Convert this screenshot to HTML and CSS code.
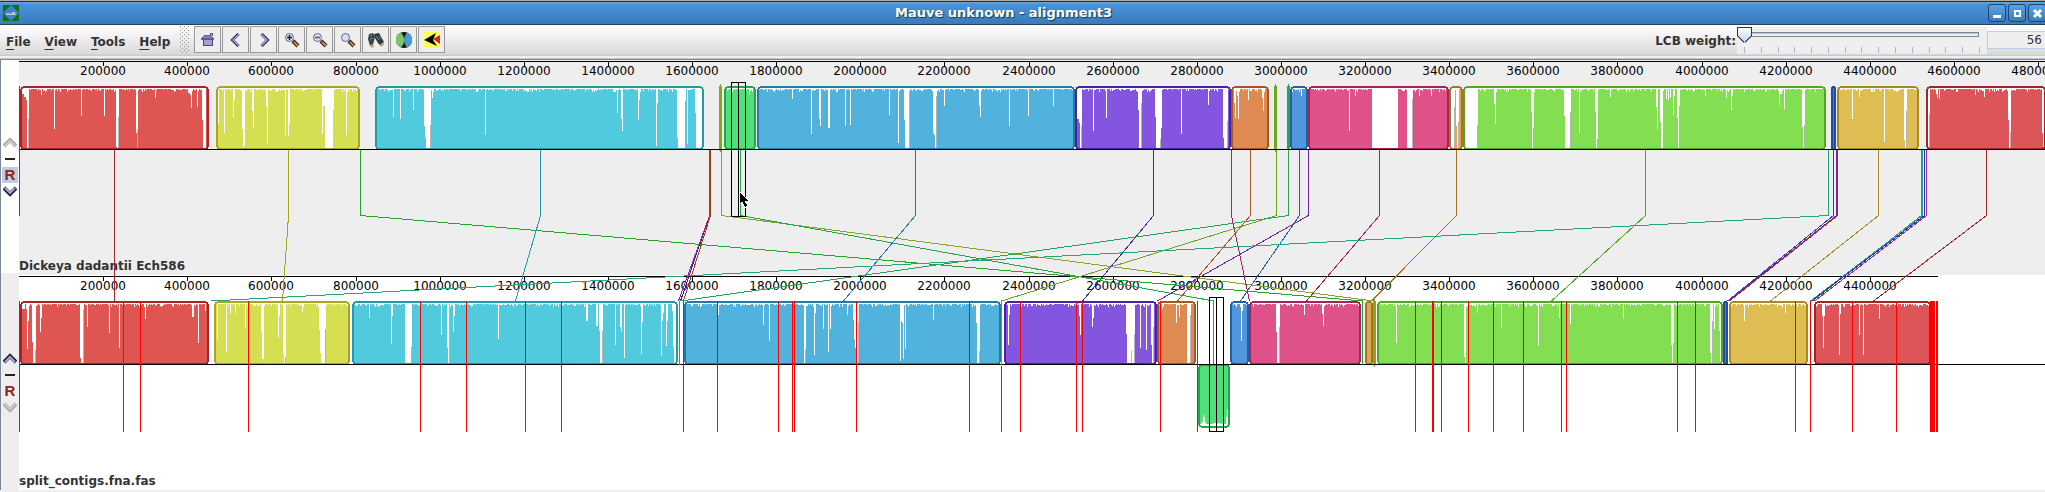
FILE: index.html
```html
<!DOCTYPE html>
<html lang="en">
<head>
<meta charset="utf-8">
<title>Mauve unknown - alignment3</title>
<link rel="stylesheet" href="styles.css">
</head>
<body>
<header class="titlebar">
  <svg class="app-icon" width="16" height="16" viewBox="0 0 16 16" aria-hidden="true"><rect width="16" height="16" fill="#157015"/><path d="M8 0L16 8L8 16L0 8Z" fill="#3c82d2"/><path d="M3 9h10v1H3zM4 8h2v1H4zM7 8h1v1H7zM9 7h3v2H9z" fill="#c4c8c8"/></svg>
  <h1 class="title">Mauve unknown - alignment3</h1>
  <div class="window-buttons">
    <button class="wbtn" aria-label="Minimize"><svg width="16" height="16" shape-rendering="crispEdges"><path d="M4 10h8v3H4z" fill="#fff"/></svg></button>
    <button class="wbtn" aria-label="Maximize"><svg width="16" height="16" shape-rendering="crispEdges"><path d="M6 6h5v5H6z" fill="none" stroke="#fff" stroke-width="2"/></svg></button>
    <button class="wbtn" aria-label="Close"><svg width="16" height="16"><path d="M5 5L12 12M12 5L5 12" stroke="#fff" stroke-width="3"/></svg></button>
  </div>
</header>

<div class="menubar">
  <nav class="menus">
    <button class="menu"><u>F</u>ile</button>
    <button class="menu"><u>V</u>iew</button>
    <button class="menu"><u>T</u>ools</button>
    <button class="menu"><u>H</u>elp</button>
  </nav>
  <div class="toolbar">
    <span class="grip"></span>
    <button class="tool" aria-label="Home"><svg width="16" height="16" shape-rendering="crispEdges"><path d="M10 1h3v3h-3zM4 3h6l4 3v2H1V6z" fill="#5c5c90"/><path d="M3 8h10v6H3z" fill="#4a4a7c"/><path d="M4 8h8v5H4z" fill="#a0a0d2"/><path d="M4 4h6l2 2H2z" fill="#8484b8"/><path d="M11 2h1v2h-1z" fill="#a0a0d2"/></svg></button>
    <button class="tool" aria-label="Back"><svg width="16" height="16"><path d="M10.500 2L4.500 8L10.500 14" fill="none" stroke="#222238" stroke-width="3"/><path d="M10.500 2.500L5 8L10.500 13.500" fill="none" stroke="#a8a8e8" stroke-width="1.500"/></svg></button>
    <button class="tool" aria-label="Forward"><svg width="16" height="16"><path d="M5.500 2L11.500 8L5.500 14" fill="none" stroke="#222238" stroke-width="3"/><path d="M5.500 2.500L11 8L5.500 13.500" fill="none" stroke="#a8a8e8" stroke-width="1.500"/></svg></button>
    <button class="tool" aria-label="Zoom in"><svg width="16" height="16"><path d="M9 9L14 14" stroke="#33231c" stroke-width="4"/><path d="M10 10L14 14" stroke="#d08850" stroke-width="2"/><circle cx="5.500" cy="5.500" r="4" fill="#dcdcf8" stroke="#66667c" stroke-width="1"/><path d="M3 5.500h5M5.500 3v5" stroke="#222" stroke-width="1.500"/></svg></button>
    <button class="tool" aria-label="Zoom out"><svg width="16" height="16"><path d="M9 9L14 14" stroke="#33231c" stroke-width="4"/><path d="M10 10L14 14" stroke="#d08850" stroke-width="2"/><circle cx="5.500" cy="5.500" r="4" fill="#dcdcf8" stroke="#66667c" stroke-width="1"/><path d="M3 5.500h5" stroke="#555577" stroke-width="1.500"/></svg></button>
    <button class="tool" aria-label="Zoom reset"><svg width="16" height="16"><path d="M9 9L14 14" stroke="#33231c" stroke-width="4"/><path d="M10 10L14 14" stroke="#d08850" stroke-width="2"/><circle cx="5.500" cy="5.500" r="4" fill="#dcdcf8" stroke="#66667c" stroke-width="1"/></svg></button>
    <button class="tool" aria-label="Find"><svg width="16" height="16"><path d="M1 2L5 1L7 5L5 13L2 14L0 7Z" fill="#34464a"/><path d="M6 2L11 1L16 10L13 14L10 11L7 6Z" fill="#2b3c40"/><path d="M2 4L4 3M2 7L5 6M8 4L11 8M11 4L13 7" stroke="#7b9094"/><path d="M2 13l3-1 1 3-3 1zM12 13l3-3 1 3-3 2z" fill="#c9a07c"/></svg></button>
    <button class="tool" aria-label="Color scheme"><svg width="16" height="16"><circle cx="8" cy="8" r="8" fill="#111"/><path d="M5 0.500A8 8 0 0 0 5 15.500Q12 8 5 0.500Z" fill="#7cc465"/><path d="M11 0.500A8 8 0 0 1 11 15.500Q5 8 11 0.500Z" fill="#4b9bd2"/></svg></button>
    <button class="tool" aria-label="Export"><svg width="16" height="16"><rect width="16" height="16" fill="#ffff5a"/><path d="M0 8L12 1L9 8L13 14Z" fill="#000"/><path d="M9 7L16 3V12Z" fill="#d62222"/></svg></button>
  </div>
  <div class="weight">
    <label class="weight-label" for="lcb">LCB weight:</label>
    <div class="slider-box">
      <input class="slider" id="lcb" type="range" min="0" max="100" value="0">
      <div class="ticks"><i></i><i></i><i></i><i></i><i></i><i></i><i></i><i></i><i></i><i></i><i></i><i></i><i></i><i></i><i></i></div>
    </div>
    <input class="weight-value" type="text" value="56" aria-label="LCB weight value">
  </div>
</div>

<main class="viewer">
  <section class="genome first">
    <div class="gutter">
      <button class="gbtn" aria-label="Move up" disabled><svg width="14" height="12"><path d="M1 9L7 3L13 9" fill="none" stroke="#aaa" stroke-width="4"/><path d="M2 9L7 4L12 9" fill="none" stroke="#ccc" stroke-width="2"/></svg></button>
      <button class="gbtn" aria-label="Collapse"><span class="dash"></span></button>
      <button class="gbtn selected" aria-label="Set reference">R</button>
      <button class="gbtn" aria-label="Move down"><svg width="14" height="12"><path d="M1 3L7 9L13 3" fill="none" stroke="#1c1c30" stroke-width="4"/><path d="M2 3L7 8L12 3" fill="none" stroke="#a4a4e0" stroke-width="2"/></svg></button>
    </div>
    <div class="track"><h2 class="name">Dickeya dadantii Ech586</h2></div>
  </section>
  <section class="genome second">
    <div class="gutter">
      <button class="gbtn" aria-label="Move up"><svg width="14" height="12"><path d="M1 9L7 3L13 9" fill="none" stroke="#1c1c30" stroke-width="4"/><path d="M2 9L7 4L12 9" fill="none" stroke="#a4a4e0" stroke-width="2"/></svg></button>
      <button class="gbtn" aria-label="Collapse"><span class="dash"></span></button>
      <button class="gbtn" aria-label="Set reference">R</button>
      <button class="gbtn" aria-label="Move down" disabled><svg width="14" height="12"><path d="M1 3L7 9L13 3" fill="none" stroke="#aaa" stroke-width="4"/><path d="M2 3L7 8L12 3" fill="none" stroke="#ccc" stroke-width="2"/></svg></button>
    </div>
    <div class="track"><h2 class="name">split_contigs.fna.fas</h2></div>
  </section>
  <svg class="alignment" role="img" aria-label="Genome alignment"><g id="plot" transform="translate(-19,-60)"></g></svg>
</main>
<script src="alignment.js"></script>
</body>
</html>
```
FILE: styles.css
```css
* { box-sizing: border-box; }
body {
  margin: 0;
  background: #eee;
  color: #333;
  font: bold 12px/16px "DejaVu Sans", sans-serif;
  overflow-x: hidden;
}
button { font: inherit; color: inherit; padding: 0; margin: 0; border: 0; background: none; }
svg { display: block; flex: none; }

.titlebar {
  display: flex;
  align-items: center;
  height: 25px;
  padding-left: 3px;
  border-top: 1px solid #b3ac9b;
  border-bottom: 1px solid #24405f;
  background: linear-gradient(#1d2f40 0 1px, #5ea4e2 1px 2px, #4a93d8 3px, #428acd 50%, #3a7ab8);
}
.title {
  flex: 1;
  margin: 0;
  text-align: center;
  color: #fff;
  font-size: 13px;
  line-height: 20px;
  text-shadow: 1px 1px 1px #1b3550;
}
.window-buttons { display: flex; gap: 2px; margin-right: -1px; }
.wbtn {
  width: 18px;
  height: 18px;
  border: 1px solid #1f4468;
  border-radius: 3px;
  background: linear-gradient(#5ba2e2, #3a7cbd);
}

.menubar {
  display: flex;
  align-items: flex-start;
  height: 35px;
  border-bottom: 1px solid #7a8799;
  background: linear-gradient(#fff, #f8f6f8 20%, #dadada 29px, #ccc 30px 31px, #eee 31px 33px, #c4c8ce 33px);
}
.menus { display: flex; gap: 14px; padding: 9px 10px 0 6px; }
.menu u { text-decoration: underline; text-underline-offset: 3px; }
.toolbar { display: flex; gap: 1px; padding-top: 1px; }
.grip {
  width: 10px;
  height: 28px;
  margin-right: 3px;
  background:
    conic-gradient(at 1px 1px, transparent 270deg, #8c8c8c 0) 0 0 / 4px 4px,
    conic-gradient(at 1px 1px, transparent 270deg, #8c8c8c 0) 2px 2px / 4px 4px;
}
.tool {
  display: grid;
  place-items: center;
  width: 27px;
  height: 27px;
  border: 1px solid #999;
  background: #eee;
}
.weight { display: flex; margin-left: auto; padding-top: 2px; margin-right: -1px; }
.weight-label { padding: 6px 1px 0 0; }
.slider-box { width: 250px; height: 27px; background: #eee; }
.slider {
  display: block;
  appearance: none;
  width: 249px;
  height: 16px;
  margin: 0;
  background:
    linear-gradient(#7a8799, #7a8799) 241px 5px / 1px 5px no-repeat,
    linear-gradient(#7a8799 1px, #b8c4d8 1px 2px, #eee 2px 4px, #7a8799 4px 5px) 7px 5px / 235px 5px no-repeat;
}
.slider::-webkit-slider-thumb {
  appearance: none;
  width: 15px;
  height: 16px;
  border: 0;
  clip-path: polygon(0 0, 100% 0, 100% 9px, 8px 100%, 7px 100%, 0 9px);
  background:
    linear-gradient(#333, #333) 0 0 / 15px 1px no-repeat,
    linear-gradient(#333, #333) 0 0 / 1px 9px no-repeat,
    linear-gradient(#333, #333) 14px 0 / 1px 9px no-repeat,
    linear-gradient(to top right, #333 58%, transparent 58%) 0 9px / 7px 7px no-repeat,
    linear-gradient(to top left, #333 58%, transparent 58%) 8px 9px / 7px 7px no-repeat,
    linear-gradient(#fff, #bcd3f2);
}
.ticks { display: flex; justify-content: space-between; padding: 4px 7px 0; }
.ticks i { width: 1px; height: 6px; background: #a3b8d0; }
.weight-value {
  width: 59px;
  height: 18px;
  margin-top: 4px;
  padding: 0 3px;
  border: 1px solid #b8cfe5;
  background: #eee;
  color: #333;
  font: 12px/16px "DejaVu Sans", sans-serif;
  text-align: right;
}

.viewer { position: relative; border-left: 1px solid #7a8799; }
.genome { display: flex; height: 215px; }
.first { border-bottom: 2px solid #eee; }
.gutter {
  display: flex;
  flex-direction: column;
  align-items: center;
  justify-content: center;
  width: 18px;
}
.first .gutter { background: #fff; }
.first .track { background: #eee; }
.second .gutter { background: #eee; }
.second .track { background: #fff; padding-bottom: 2px; }
.track { flex: 1; display: flex; align-items: flex-end; }
.name { margin: 0; font-size: 12px; line-height: 14px; }
.gbtn {
  display: grid;
  place-items: center;
  width: 16px;
  height: 16px;
  color: #962318;
  font: bold 15px/16px "Liberation Sans", sans-serif;
}
.selected { background: #bccce6; }
.dash { width: 10px; height: 2px; background: #222; }

.alignment {
  position: absolute;
  left: 18px;
  top: 0;
  width: calc(100% - 18px);
  height: 100%;
  overflow: hidden;
  pointer-events: none;
  shape-rendering: crispEdges;
}
.axis-label { font: 12px "DejaVu Sans", sans-serif; fill: #000; text-anchor: middle; }
```
FILE: alignment.js
```js
const NS = "http://www.w3.org/2000/svg";
const plot = document.getElementById("plot");

function add(tag, attrs, text) {
  const el = document.createElementNS(NS, tag);
  for (const k in attrs) el.setAttribute(k, attrs[k]);
  if (text) el.textContent = text;
  plot.appendChild(el);
}
const rect = (x, y, width, height, fill) => add("rect", { x, y, width, height, fill });
const line = (d, stroke) => add("path", { d, stroke, fill: "none" });

let seed = 7;
function noise() {
  seed = (seed * 1103515245 + 12345) % 2147483648;
  return seed / 2147483648;
}

const FULL = 62;

// [left, right, fill, border, dips "x,width,depth", gaps "x,start" drawn in grey]
const top1 = [
  [20, 209, "#de5552", "#a62328", "20,2,6 22,2,8 24,2,11 26,1,14 27,2,62 41,1,9 54,1,43 81,1,30 104,1,30 116,1,61 117,2,62 136,1,47 137,1,62 155,1,12 188,2,7 190,1,9 191,1,22 197,1,21 202,1,34 203,3,62", "28,33 118,31 137,44"],
  [216, 360, "#d6de52", "#a6a623", "218,1,38 224,1,47 233,1,31 234,1,14 242,1,43 243,2,62 252,1,25 253,1,42 266,1,20 267,1,57 285,1,49 288,1,50 289,1,38 322,1,48 323,1,20 324,1,20 325,8,62 333,1,24 346,1,49", "244,60"],
  [375, 704, "#52cade", "#239aa6", "393,1,31 400,1,33 413,1,24 424,1,40 425,1,52 426,5,62 432,1,12 485,1,49 617,1,27 621,1,33 622,1,45 638,1,34 639,1,14 656,1,60 657,1,17 677,1,52 678,7,62 685,1,15 687,1,58 695,1,27 696,6,62", "430,39"],
  [724, 756, "#52de7b", "#23a649", "749,1,9", ""],
  [757, 1075, "#52b2de", "#237aa6", "792,1,13 811,1,48 819,1,33 820,1,40 828,2,42 845,1,40 850,1,39 889,1,29 898,1,57 904,1,34 905,5,62 933,1,47 934,1,49 935,2,62 944,1,20 979,1,20 980,1,31 1009,1,40 1028,1,30 1053,1,20", "909,5 936,10"],
  [1075, 1231, "#8455de", "#4523a6", "1077,2,33 1079,1,37 1080,2,62 1093,1,45 1106,1,32 1138,1,24 1139,3,62 1155,1,31 1156,5,62 1161,1,42 1181,1,48 1208,1,19 1223,1,52 1224,4,62", "1081,40 1141,17 1160,53 1227,35"],
  [1231, 1269, "#de8a52", "#a65523", "1234,1,17 1235,1,32 1237,1,10 1238,1,33 1248,1,14 1262,1,12 1263,1,25", ""],
  [1290, 1308, "#5297de", "#2361a6", "1301,1,10", ""],
  [1308, 1449, "#de5289", "#a6235a", "1349,1,45 1355,1,10 1372,26,62 1407,6,62 1419,1,10 1431,1,10", "1412,13"],
  [1449, 1463, "#dea852", "#a67323", "1451,4,62 1456,1,40 1457,2,62", "1454,21 1458,36"],
  [1463, 1826, "#84de52", "#52a623", "1465,13,62 1494,1,18 1495,1,38 1531,1,26 1532,2,62 1564,1,30 1565,6,62 1579,1,47 1595,1,26 1596,2,62 1610,1,11 1656,1,21 1657,1,43 1660,1,36 1661,3,62 1666,1,13 1668,1,14 1670,1,12 1673,1,29 1674,1,10 1677,1,32 1678,2,62 1705,1,10 1726,1,12 1731,1,24 1732,1,10 1779,1,19 1780,2,8 1784,1,23 1802,1,41 1803,2,62", "1477,39 1533,42 1570,26 1597,53 1663,5 1679,20 1804,39"],
  [1831, 1836, "#5275de", "#234ba6", "", ""],
  [1837, 1919, "#debd52", "#a68923", "1852,1,33 1859,1,11 1884,1,56 1904,1,54 1905,2,62", "1906,25"],
  [1926, 2046, "#de5559", "#a62323", "1928,2,62 1936,1,8 1937,1,12 1939,1,13 1975,1,9 1984,1,11 2008,1,34 2009,2,62 2042,1,47 2043,2,62", "1929,28 2010,46"],
];
const bottom1 = [
  [20, 209, "#de5552", "#a62328", "20,5,8 26,1,8 27,1,48 28,1,20 32,1,41 33,3,62 40,1,31 41,1,17 80,1,57 81,3,62 87,1,26 109,1,32 119,1,47 145,1,18 192,2,16 198,1,42 205,1,10", "35,49 83,9"],
  [214, 350, "#d6de52", "#a6a623", "217,1,39 226,1,51 230,1,13 235,1,13 245,1,28 261,1,30 262,2,58 278,1,37 279,1,15 283,1,53 284,2,62 302,1,11 319,1,29 320,1,52 321,5,62", "285,56 325,28"],
  [352, 678, "#52cade", "#239aa6", "369,1,17 391,1,43 392,1,15 405,7,62 441,1,34 447,1,47 448,2,62 453,1,31 454,1,15 498,1,38 586,2,20 596,2,25 599,1,30 600,3,62 615,1,44 620,1,26 621,1,31 624,1,57 641,1,53 642,1,21 661,1,55 662,1,20 663,1,12 666,1,45 667,1,20 672,1,10 673,1,46 674,2,62", "411,46 449,3 602,30"],
  [684, 1001, "#52b2de", "#237aa6", "718,1,14 763,1,24 769,1,40 804,2,62 814,1,54 815,1,12 823,1,28 828,1,51 830,1,28 847,1,14 853,1,19 854,1,38 855,1,47 856,3,62 900,1,60 901,1,20 902,1,22 903,1,58 905,1,48 933,1,19 976,1,22 977,3,62", "805,48 858,22 979,50"],
  [1004, 1157, "#8455de", "#4523a6", "1008,1,44 1009,1,14 1079,1,15 1080,1,34 1092,1,26 1093,1,17 1126,1,33 1127,8,62 1140,1,47 1146,1,49 1151,1,44 1152,2,62", "1131,50 1134,33 1153,26"],
  [1157, 1196, "#de8a52", "#a65523", "1162,1,8 1176,1,22 1179,1,16 1187,4,62", "1190,14"],
  [1230, 1249, "#5297de", "#2361a6", "1241,1,40 1242,1,10", ""],
  [1249, 1361, "#de5289", "#a6235a", "1276,1,31 1277,3,62 1304,1,14 1322,1,13 1323,1,25", "1279,26"],
  [1365, 1373, "#dea852", "#a67323", "", ""],
  [1377, 1723, "#84de52", "#52a623", "1396,1,42 1464,1,56 1465,1,62 1477,1,12 1501,1,27 1538,1,45 1559,1,17 1570,1,23 1623,1,18 1671,1,44 1672,2,62 1710,1,52 1711,2,62 1714,1,28 1719,1,30 1720,1,62", "1673,42 1712,20"],
  [1723, 1728, "#5275de", "#234ba6", "", ""],
  [1729, 1808, "#debd52", "#a68923", "1744,1,20 1785,1,12", ""],
  [1814, 1931, "#de5559", "#a62323", "1822,1,15 1823,1,47 1824,1,15 1839,1,54 1840,1,13 1859,1,34 1863,1,54 1879,1,18", ""],
];

function block([left, right, fill, border, dips, gaps], y, inverted) {
  const width = right - left;
  const frame = { x: left + 1, y: y + 1, width: width - 2, height: FULL, rx: Math.min(4, width / 3) };
  add("rect", { ...frame, fill: "#fff" });
  const depth = {};
  for (const dip of dips.split(" ").filter(Boolean)) {
    const [x, w, d] = dip.split(",").map(Number);
    for (let i = 0; i < w; i++) depth[x + i] = d;
  }
  let d = "";
  for (let x = left + 1; x < right - 1; x++) {
    let start = depth[x];
    if (start === undefined) {
      const n = noise();
      start = width < 12 ? 2 : n < 0.05 ? 6 : n < 0.14 ? 5 : n < 0.4 ? 4 : 3;
    }
    if (start < FULL) {
      d += inverted ? `M${x} ${y + 1}h1v${FULL - start}h-1z` : `M${x} ${y + start}h1v${FULL - start}h-1z`;
    }
  }
  add("path", { d, fill });
  for (const gap of gaps.split(" ").filter(Boolean)) {
    const [x, start] = gap.split(",").map(Number);
    rect(x, y + start, 1, FULL - start, "#b4b4b4");
  }
  add("rect", { ...frame, fill: "none", stroke: border, "stroke-width": 2 });
}

// Rulers
function axis(y, end, count) {
  rect(19, y, end - 19, 1, "#000");
  for (let k = 1; k <= count; k++) {
    const x = Math.round(19 + k * 84.13);
    rect(x, y, 1, 5, "#000");
    add("text", { x, y: y + 14, class: "axis-label" }, String(k * 200000));
  }
}
axis(61, 4000, 24);
axis(276, 1938, 22);

top1.forEach((b) => block(b, 86));
bottom1.forEach((b) => block(b, 301));
block([1198, 1230, "#52de7b", "#23a649", "1203,1,12 1204,1,10 1226,1,10 1227,2,18", ""], 364, true);

// Blocks too narrow for an outline
rect(719, 86, 3, 65, "#84a623");
rect(720, 84, 1, 68, "#84a623");
rect(1274, 86, 3, 64, "#6ba623");
rect(1275, 84, 1, 68, "#6ba623");
rect(1287, 86, 3, 63, "#23a65a");
rect(1288, 84, 1, 65, "#23a65a");
rect(1373, 301, 3, 63, "#84a623");
rect(1374, 299, 1, 68, "#84a623");

rect(19, 149, 4000, 1, "#000");
rect(19, 364, 4000, 1, "#000");

// Links between matching blocks: [x above, x below, colour]
[
  [114, 114, "#a62328"], [288, 282, "#a6a623"], [360, 1362, "#23a628"], [540, 515, "#239aa6"],
  [710, 683, "#a63a23"], [709, 680, "#2323a6"], [709, 678, "#a6238a"],
  [721, 1373, "#84a623"], [740, 1213, "#23a649"], [915, 843, "#237aa6"],
  [1153, 1082, "#4523a6"], [1231, 1249, "#a6236b"], [1250, 1177, "#a65523"],
  [1276, 1001, "#6ba623"], [1288, 680, "#23a65a"], [1299, 1240, "#2361a6"],
  [1308, 1157, "#6b23a6"], [1379, 1306, "#a6235a"], [1456, 1371, "#a67323"],
  [1645, 1551, "#52a623"], [1828, 211, "#23a67a"], [1833, 1727, "#234ba6"],
  [1836, 1728, "#7a23a6"], [1837, 1729, "#a62345"], [1878, 1770, "#a68923"],
  [1921, 1812, "#23a635"], [1922, 1810, "#23a69a"], [1924, 1811, "#2335a6"],
  [1926, 1814, "#9a23a6"], [1986, 1873, "#a62323"],
].forEach(([a, b, c]) => line(`M${a + 0.5} 150V215.5L${b + 0.5} 301`, c));
rect(1362, 301, 1, 64, "#23a628");
rect(679, 301, 1, 64, "#23a65a");
rect(1001, 301, 1, 64, "#6ba623");
rect(1213, 301, 1, 63, "#23a649");

// Contig boundaries
rect(19, 86, 1, 130, "#f00");
[19, 123, 140, 248, 420, 466, 525, 561, 683, 717, 778, 792, 794, 856, 969, 1020, 1076, 1082,
  1160, 1197, 1415, 1441, 1468, 1493, 1523, 1561, 1566, 1677, 1695, 1795, 1810, 1852, 1896,
].forEach((x) => rect(x, 301, 1, 131, "#f00"));
rect(1001, 366, 1, 66, "#f00");
rect(1432, 301, 2, 131, "#f00");
rect(1930, 301, 5, 131, "#f00");
rect(1936, 301, 2, 131, "#f00");

// Highlighted region in both genomes
line("M731.5 82.5H745.5V216.5H731.5ZM738.5 82.5V216.5", "#000");
line("M1209.5 297.5H1223.5V431.5H1209.5ZM1216.5 297.5V431.5", "#000");

// Pointer
add("path", { d: "M739 191V205L742 202L745 208L748 206L745 201H749Z", fill: "#000", stroke: "#fff", "stroke-width": 1 });
```
